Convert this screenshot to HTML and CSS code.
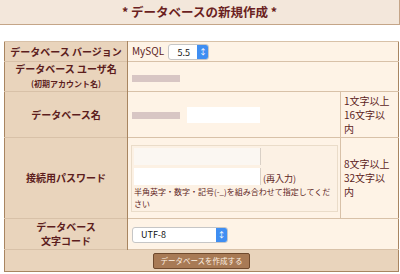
FILE: index.html
```html
<!DOCTYPE html>
<html lang="ja">
<head>
  <meta charset="UTF-8">
  <title>データベースの新規作成</title>
  <link rel="stylesheet" href="styles.css">
</head>
<body>

  <h1 class="titulo">* データベースの新規作成 *</h1>

  <table class="formulario">
    <tr class="fila-version">
      <th>データベース バージョン</th>
      <td colspan="2">
        MySQL
        <span class="selector corto">5.5<span class="flechas">&#8597;</span></span>
      </td>
    </tr>
    <tr class="fila-usuario">
      <th>データベース ユーザ名<br><small>(初期アカウント名)</small></th>
      <td colspan="2"><span class="borroso"></span></td>
    </tr>
    <tr class="fila-nombre">
      <th>データベース名</th>
      <td><span class="borroso"></span><span class="campo nombre"></span></td>
      <td class="nota">1文字以上<br>16文字以<br>内</td>
    </tr>
    <tr class="fila-clave">
      <th>接続用パスワード</th>
      <td>
        <div class="caja">
          <span class="campo clave"></span>
          <div class="linea"><span class="campo clave"></span>(再入力)</div>
          <p class="ayuda">半角英字・数字・記号(-_)を組み合わせて指定してください</p>
        </div>
      </td>
      <td class="nota">8文字以上<br>32文字以<br>内</td>
    </tr>
    <tr class="fila-codigo">
      <th>データベース<br>文字コード</th>
      <td colspan="2">
        <span class="selector largo">UTF-8<span class="flechas">&#8597;</span></span>
      </td>
    </tr>
    <tr class="fila-boton">
      <td colspan="3"><button class="btn-crear">データベースを作成する</button></td>
    </tr>
  </table>

</body>
</html>
```

FILE: styles.css
```css
body {
  margin: 0;
  font-family: "Noto Sans CJK JP", "Liberation Sans", sans-serif;
  color: #5c1d1d;
  background-color: #ffffff;
}

.titulo {
  margin: 0;
  height: 25px;
  line-height: 24px;
  font-size: 12.5px;
  text-align: center;
  color: #6b1f22;
  background-color: #f3e7db;
  border-bottom: 1px solid #c4a588;
  border-right: 1px solid #c4a588;
  box-sizing: border-box;
}

.formulario {
  margin: 16px 0 0 4px;
  width: 395px;
  border-collapse: collapse;
  border: 1px solid #a88561;
  font-size: 10px;
}

th, td {
  padding: 0 4px;
  border-top: 1px solid #d8c1a8;
}

th {
  width: 114px;
  background-color: #e9d4bc;
  border-right: 1px solid #a88561;
  font-weight: bold;
  text-align: center;
  line-height: 14px;
}

th small {
  font-size: 8px;
}

td {
  background-color: #fef3e6;
  text-align: left;
}

.fila-version th, .fila-version td { height: 19px; }
.fila-usuario th, .fila-usuario td { height: 29px; }
.fila-nombre th, .fila-nombre td { height: 45px; }
.fila-clave th, .fila-clave td { height: 76px; }
.fila-codigo th, .fila-codigo td { height: 30px; }

.fila-clave td:not(.nota) {
  padding: 2px 2px 2px 3px;
}

.nota {
  width: 51px;
  border-left: 1px solid #d8c1a8;
  line-height: 14px;
  padding: 0 3px;
}

.selector {
  display: inline-flex;
  align-items: center;
  justify-content: space-between;
  height: 14px;
  margin-left: 2px;
  padding-left: 8px;
  background-color: #ffffff;
  border: 1px solid #c6c6c6;
  border-radius: 3px;
  font-size: 9px;
  color: #111111;
  vertical-align: middle;
  overflow: hidden;
}

.selector.corto { width: 31px; }
.selector.largo { width: 86px; margin-left: 0; }

.flechas {
  width: 11px;
  height: 14px;
  line-height: 14px;
  background-color: #3f8ef2;
  color: #ffffff;
  font-size: 8px;
  text-align: center;
}

.borroso {
  display: inline-block;
  width: 48px;
  height: 7px;
  background-color: #d8c6c4;
  vertical-align: middle;
}

.campo {
  display: inline-block;
  height: 16px;
  background-color: #ffffff;
  vertical-align: middle;
}

.campo.nombre {
  width: 73px;
  margin-left: 7px;
}

.caja {
  border: 1px solid #eadcc9;
  background-color: #fcf1e4;
  padding: 2px 6px 1px 2px;
}

.campo.clave {
  display: block;
  width: 126px;
  height: 17px;
  background-color: #fbf7f2;
  border-right: 1px solid #d9d0c6;
}

.linea {
  display: flex;
  align-items: flex-end;
  gap: 2px;
  margin-top: 3px;
  font-size: 9px;
  line-height: 12px;
}

.linea .campo.clave {
  background-color: #ffffff;
}

.ayuda {
  margin: 1px 0 0;
  font-size: 8px;
  line-height: 12px;
}

.fila-boton td {
  height: 21px;
  background-color: #e9d4bc;
  text-align: center;
}

.btn-crear {
  height: 16px;
  padding: 0 6px;
  background-color: #a87a55;
  border: 1px solid #6f4a2e;
  border-radius: 2px;
  color: #fdf0e2;
  font-family: inherit;
  font-size: 7.5px;
  line-height: 14px;
}
```
